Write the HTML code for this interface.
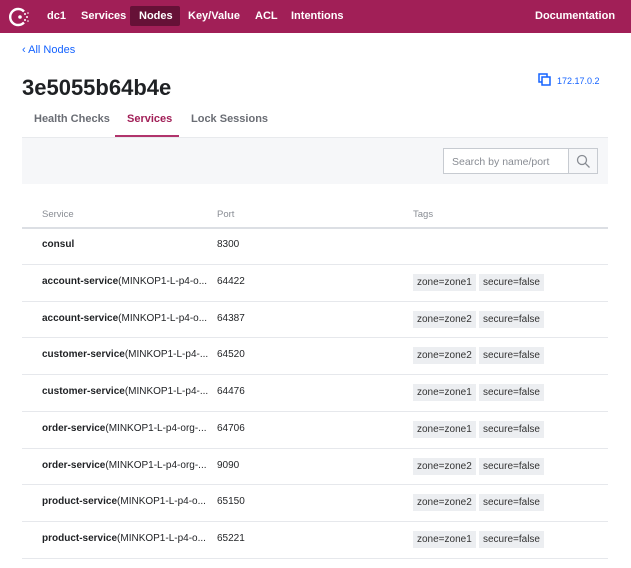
<!DOCTYPE html>
<html><head><meta charset="utf-8"><style>
*{box-sizing:border-box;margin:0;padding:0}
body{width:631px;height:568px;overflow:hidden;background:#fff;font-family:"Liberation Sans",sans-serif;color:#1f2124;font-size:11px}
.nav{height:33px;background:#a11f57;position:relative;color:#fff;font-weight:bold;font-size:11px}
.nav span{position:absolute;top:10px}
.act{position:absolute;left:130px;top:6px;width:50px;height:20px;background:#661137;border-radius:2px}
.back{position:absolute;left:22px;top:44px;color:#1563ff;font-size:11px}
h1{position:absolute;left:22px;top:75px;font-size:22px;font-weight:bold;color:#1f2124}
.ip{position:absolute;left:557px;top:76px;color:#1563ff;font-size:9px}
.tab{position:absolute;top:113px;font-size:11px;font-weight:bold;color:#6a6d74}
.uline{position:absolute;left:115px;top:135px;width:64px;height:2px;background:#b1346c}
.bar{position:absolute;left:22px;top:137px;width:586px;height:47px;background:#f6f7f9;border-top:1px solid #e8eaed}
.search{position:absolute;left:443px;top:148px;width:155px;height:26px;border:1px solid #c7cbd1;background:#fff}
.search .t{position:absolute;left:8px;top:7px;color:#888c93;font-size:10.5px}
.search .b{position:absolute;right:0;top:0;width:29px;height:24px;border-left:1px solid #c7cbd1;background:#f6f7f9}
.th{position:absolute;top:209px;color:#888c93;font-size:9.5px}
.hl{position:absolute;left:22px;width:586px;height:1px;background:#e6e8ec}
.r{position:absolute;font-size:10px}
.tag{position:absolute;height:17px;background:#eceef1;color:#333;font-size:10px;padding:3px 4px;line-height:11px}
</style></head><body>
<div class="nav">
<svg style="position:absolute;left:9px;top:6px" width="22" height="22" viewBox="0 0 22 22"><path d="M15 5.5A8 8 0 1 0 15 16.5" fill="none" stroke="#fff" stroke-width="2.4"/><circle cx="11" cy="11" r="1.8" fill="#fff"/><circle cx="16" cy="8" r="1" fill="#fff"/><circle cx="18" cy="11" r="1" fill="#fff"/><circle cx="16" cy="14" r="1" fill="#fff"/><circle cx="19" cy="7" r=".8" fill="#fff"/><circle cx="19" cy="15" r=".8" fill="#fff"/></svg>
<div class="act"></div>
<span style="left:47px">dc1</span><span style="left:81px">Services</span><span style="left:139px">Nodes</span><span style="left:188px">Key/Value</span><span style="left:255px">ACL</span><span style="left:291px">Intentions</span><span style="left:535px">Documentation</span>
</div>
<div class="back">‹ All Nodes</div>
<h1>3e5055b64b4e</h1>
<svg style="position:absolute;left:538px;top:73px" width="13" height="13" viewBox="0 0 13 13"><rect x="1" y="1" width="8" height="8" fill="none" stroke="#1563ff" stroke-width="1.5"/><rect x="4" y="4" width="8" height="8" fill="#fff" stroke="#1563ff" stroke-width="1.5"/></svg>
<div class="ip">172.17.0.2</div>
<div class="tab" style="left:34px">Health Checks</div>
<div class="tab" style="left:127px;color:#a11f57">Services</div>
<div class="tab" style="left:191px">Lock Sessions</div>
<div class="uline"></div>
<div class="bar"></div>
<div class="search"><div class="t">Search by name/port</div><div class="b"><svg style="position:absolute;left:7px;top:5px" width="15" height="15" viewBox="0 0 15 15"><circle cx="6" cy="6" r="4.5" fill="none" stroke="#888c93" stroke-width="1.3"/><path d="M9.3 9.3L13.5 13.5" stroke="#888c93" stroke-width="1.3"/></svg></div></div>
<div class="th" style="left:42px">Service</div><div class="th" style="left:217px">Port</div><div class="th" style="left:413px">Tags</div>
<div class="hl" style="top:227px;height:2px;background:#dcdfe4"></div>
<div class="r" style="left:42px;top:239px;font-weight:bold">consul</div><div class="r" style="left:217px;top:239px">8300</div>
<div class="hl" style="top:264px"></div>
<div id="rows"></div>
<script>
var d=[["account-service","MINKOP1-L-p4-o...","64422","zone1"],["account-service","MINKOP1-L-p4-o...","64387","zone2"],["customer-service","MINKOP1-L-p4-...","64520","zone2"],["customer-service","MINKOP1-L-p4-...","64476","zone1"],["order-service","MINKOP1-L-p4-org-...","64706","zone1"],["order-service","MINKOP1-L-p4-org-...","9090","zone2"],["product-service","MINKOP1-L-p4-o...","65150","zone2"],["product-service","MINKOP1-L-p4-o...","65221","zone1"]];
var h="";d.forEach(function(r,i){var t=264+i*36.7;
h+='<div class="r" style="left:42px;top:'+(t+12)+'px"><b>'+r[0]+'</b>('+r[1]+'</div><div class="r" style="left:217px;top:'+(t+12)+'px">'+r[2]+'</div><div class="tag" style="left:413px;top:'+(t+10)+'px">zone='+r[3]+'</div><div class="tag" style="left:479px;top:'+(t+10)+'px">secure=false</div><div class="hl" style="top:'+Math.round(t+36.7)+'px"></div>';});
document.getElementById("rows").innerHTML=h;
</script>
</body></html>
